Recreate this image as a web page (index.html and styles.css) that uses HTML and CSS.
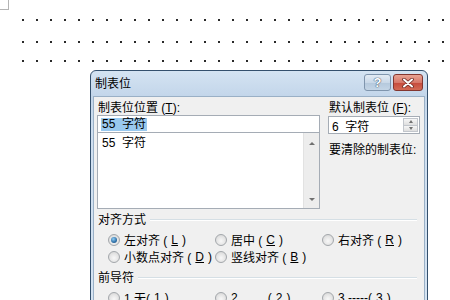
FILE: index.html
```html
<!DOCTYPE html>
<html lang="zh-CN">
<head>
    <meta charset="UTF-8">
    <title>制表位</title>
    <link rel="stylesheet" href="styles.css">
</head>
<body>

<!-- Tło dokumentu: narożnik strony i kropki tabulatorów -->
<div class="corner"></div>
<div class="dots dots-1"></div>
<div class="dots dots-2"></div>
<div class="dots dots-3"></div>

<!-- Okno dialogowe -->
<div class="dialog">
    <div class="titlebar">
        <span class="title">制表位</span>
        <div class="caption-buttons">
            <div class="cap-btn btn-help">?</div>
            <div class="cap-btn btn-close">
                <svg width="12" height="10" viewBox="0 0 12 10">
                    <path d="M2 1.5 L10 8.5 M10 1.5 L2 8.5" stroke="#6b2a24" stroke-width="3.6" stroke-linecap="round"/>
                    <path d="M2 1.5 L10 8.5 M10 1.5 L2 8.5" stroke="#fff" stroke-width="2" stroke-linecap="round"/>
                </svg>
            </div>
        </div>
    </div>

    <div class="client">
        <div class="top-row">
            <div class="col-left">
                <div class="label">制表位位置 (<u>T</u>):</div>
                <div class="combo-edit"><span class="sel">55&nbsp; 字符</span></div>
                <div class="combo-list">
                    <div class="items">
                        <div class="item">55&nbsp; 字符</div>
                    </div>
                    <div class="vscroll">
                        <span class="arrow-up"></span>
                        <span class="arrow-down"></span>
                    </div>
                </div>
            </div>
            <div class="col-right">
                <div class="label">默认制表位 (<u>F</u>):</div>
                <div class="spin">
                    <span>6&nbsp; 字符</span>
                    <div class="spin-btns">
                        <div class="spin-btn"><span class="arrow-up"></span></div>
                        <div class="spin-btn"><span class="arrow-down"></span></div>
                    </div>
                </div>
                <div class="label clear-label">要清除的制表位:</div>
            </div>
        </div>

        <!-- Sekcja wyrównania -->
        <div class="group-head"><span>对齐方式</span><div class="group-line"></div></div>
        <div class="radio-grid">
            <div class="radio-item"><span class="radio checked"></span>左对齐 (<u>L</u>)</div>
            <div class="radio-item"><span class="radio"></span>居中 (<u>C</u>)</div>
            <div class="radio-item"><span class="radio"></span>右对齐 (<u>R</u>)</div>
            <div class="radio-item"><span class="radio"></span>小数点对齐 (<u>D</u>)</div>
            <div class="radio-item"><span class="radio"></span>竖线对齐 (<u>B</u>)</div>
        </div>

        <!-- Sekcja znaków wiodących -->
        <div class="group-head group-2"><span>前导符</span><div class="group-line"></div></div>
        <div class="radio-grid">
            <div class="radio-item"><span class="radio"></span>1 无(<u>1</u>)</div>
            <div class="radio-item"><span class="radio"></span>2 ........(<u>2</u>)</div>
            <div class="radio-item"><span class="radio"></span>3 -----(<u>3</u>)</div>
        </div>
    </div>
</div>

</body>
</html>
```

FILE: styles.css
```css
* {
    box-sizing: border-box;
}

body {
    margin: 0;
    height: 300px;
    overflow: hidden;
    background-color: #fff;
    font-family: "Liberation Sans", "Noto Sans CJK SC", sans-serif;
    font-size: 12px;
    color: #000;
}

u {
    text-decoration: underline;
}

.corner {
    width: 9px;
    height: 10px;
    border-right: 1px solid #b4b4b4;
    border-bottom: 1px solid #b4b4b4;
}

.dots {
    width: 426px;
    height: 2px;
    margin-left: 22px;
    background-image: linear-gradient(to right, #2a2a2a 2px, transparent 2px);
    background-size: 14px 2px;
}

.dots-1 {
    margin-top: 9px;
}

.dots-2 {
    margin-top: 20px;
}

.dots-3 {
    margin-top: 17px;
}

.dialog {
    width: 338px;
    height: 250px;
    margin: 8px 0 0 90px;
    padding: 0 2px;
    display: flex;
    flex-direction: column;
    border: 1px solid #34506d;
    border-radius: 6px 6px 0 0;
    background: linear-gradient(to bottom, #d4e3f2 0, #c3d6ea 25px, #cfdff0 60px, #d6e4f2 100%);
}

.titlebar {
    height: 25px;
    display: flex;
    justify-content: space-between;
    align-items: flex-start;
    padding: 0 2px 0 2px;
}

.title {
    margin-top: 6px;
    line-height: 14px;
}

.caption-buttons {
    display: flex;
    gap: 2px;
    margin-top: 3px;
}

.cap-btn {
    height: 17px;
    border-radius: 3px;
    display: flex;
    align-items: center;
    justify-content: center;
}

.btn-help {
    width: 27px;
    border: 1px solid #7f95ad;
    background: linear-gradient(to bottom, #e3ebf4 0, #c9d8e8 50%, #b4c8dc 51%, #c4d5e6 100%);
    color: #fff;
    font-weight: bold;
    font-size: 13px;
    text-shadow: 0 0 1px #4d6177, 0 0 1px #4d6177, 0 0 1px #4d6177;
}

.btn-close {
    width: 30px;
    border: 1px solid #83362f;
    background: linear-gradient(to bottom, #e8a393 0, #d7786a 50%, #c5493b 51%, #d36a55 100%);
}

.client {
    flex: 1;
    border: 1px solid #9ab0c6;
    border-bottom: none;
    background-color: #f0f0f0;
    padding: 4px 3px 0 3px;
}

.top-row {
    display: flex;
    gap: 8px;
}

.label {
    line-height: 14px;
    padding-left: 1px;
    white-space: nowrap;
}

.col-left {
    width: 223px;
}

.col-right {
    width: 92px;
}

.combo-edit {
    height: 17px;
    border: 1px solid #a5acb5;
    border-bottom: none;
    background-color: #fff;
    padding-left: 3px;
    display: flex;
    align-items: center;
}

.sel {
    line-height: 13px;
    height: 13px;
    padding: 0 1px;
    background-color: #99c9ef;
}

.combo-list {
    height: 77px;
    display: flex;
    border: 1px solid #a5acb5;
    background-color: #fff;
}

.items {
    flex: 1;
    padding: 3px 0 0 4px;
}

.item {
    line-height: 15px;
}

.vscroll {
    width: 16px;
    display: flex;
    flex-direction: column;
    justify-content: space-between;
    align-items: center;
    padding: 9px 0 7px;
    background-color: #ededed;
    border-left: 1px solid #e2e2e2;
}

.arrow-up {
    width: 0;
    height: 0;
    border-left: 3px solid transparent;
    border-right: 3px solid transparent;
    border-bottom: 3px solid #707070;
}

.arrow-down {
    width: 0;
    height: 0;
    border-left: 3px solid transparent;
    border-right: 3px solid transparent;
    border-top: 3px solid #707070;
}

.spin {
    height: 18px;
    margin-top: 1px;
    border: 1px solid #a5acb5;
    background-color: #fff;
    display: flex;
    align-items: center;
    justify-content: space-between;
    padding: 0 1px 0 3px;
}

.spin-btns {
    width: 15px;
    height: 14px;
    display: flex;
    flex-direction: column;
}

.spin-btn {
    flex: 1;
    display: flex;
    align-items: center;
    justify-content: center;
    border: 1px solid #c2c6cc;
    background: linear-gradient(to bottom, #f6f6f6, #dedede);
}

.spin-btn + .spin-btn {
    border-top: none;
}

.spin-btn .arrow-up,
.spin-btn .arrow-down {
    border-left-width: 2.5px;
    border-right-width: 2.5px;
}

.clear-label {
    margin-top: 9px;
}

.group-head {
    display: flex;
    align-items: center;
    gap: 4px;
    margin-top: 4px;
    margin-right: 4px;
    line-height: 14px;
    padding-left: 1px;
}

.group-2 {
    margin-top: 6px;
}

.group-line {
    flex: 1;
    height: 2px;
    border-top: 1px solid #d5dfe5;
    border-bottom: 1px solid #fff;
}

.radio-grid {
    display: grid;
    grid-template-columns: 107px 107px 107px;
    grid-auto-rows: 17px;
    padding-left: 11px;
    margin-top: 4px;
}

.radio-item {
    display: flex;
    align-items: center;
    gap: 4px;
    white-space: nowrap;
}

.radio {
    width: 12px;
    height: 12px;
    border-radius: 50%;
    border: 1px solid #a3a7ab;
    background: radial-gradient(circle at 50% 60%, #f8f8f8 0, #e6e6e6 50%, #d0d0d0 100%);
    display: flex;
    align-items: center;
    justify-content: center;
}

.radio.checked::after {
    content: "";
    width: 6px;
    height: 6px;
    border-radius: 50%;
    background: radial-gradient(circle at 40% 35%, #8fcdf5 0, #2f6fa6 60%, #1b4a78 100%);
}
```
